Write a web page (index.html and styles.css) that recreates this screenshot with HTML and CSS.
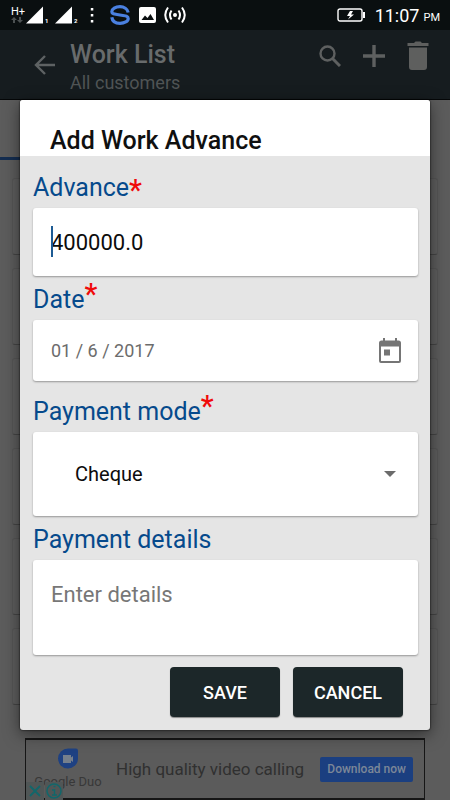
FILE: index.html
```html
<!DOCTYPE html>
<html lang="en">
<head>
<meta charset="utf-8">
<meta name="viewport" content="width=device-width, initial-scale=1">
<title>Work List</title>
<link rel="stylesheet" href="styles.css">
</head>
<body>
<div class="screen">
  <header class="status">
    <div class="status-left">
      <span class="network"><span>H+</span>
        <svg width="12" height="6" viewBox="0 0 12 6"><path d="M3 0L6 3H4V6H2V3H0ZM9 6L6 3H8V0H10V3H12Z" fill="#4c5152"/></svg>
      </span>
      <svg class="signal" width="18" height="18" viewBox="0 0 18 18"><path d="M18 0V18H0Z" fill="#fff"/></svg><span class="sim">1</span>
      <svg class="signal" width="18" height="18" viewBox="0 0 18 18"><path d="M18 0V18H0Z" fill="#fff"/></svg><span class="sim">2</span>
      <svg class="dots" width="4" height="16" viewBox="0 0 4 16"><path d="M.8 1h2.500v2.500H.8zM.8 7h2.500v2.500H.8zM.8 13h2.500v2.500H.8z" fill="#fff"/></svg>
      <svg class="sync" width="20" height="20" viewBox="0 0 20 20" fill="none" stroke="#4a80e0" stroke-width="3.200"><path d="M18.200 7.500C17.500 4 14 1.700 10 1.700C5.500 1.700 1.800 4 1.800 6.800C1.800 8.800 3.500 9.200 10 10C16.500 10.800 18.200 11.500 18.200 13.400C18.200 16.300 14.500 18.300 10 18.300C5.500 18.300 2.300 16 1.800 12.200"/></svg>
      <svg class="photo" width="18" height="18" viewBox="0 0 18 18"><rect y="1" width="17" height="16" rx="2" fill="#fff"/><path d="M2.500 14L6 9.500L8.500 12L11.500 8L15 14Z" fill="#0a0f10"/></svg>
      <svg width="22" height="18" viewBox="0 0 22 18" fill="none" stroke="#fff" stroke-width="2"><circle cx="11" cy="9" r="2" fill="#fff" stroke="none"/><path d="M7.500 4.500Q4.500 9 7.500 13.500M14.500 4.500Q17.500 9 14.500 13.500M4 1.500Q-1.500 9 4 16.500M18 1.500Q23.500 9 18 16.500"/></svg>
    </div>
    <div class="status-right">
      <svg width="28" height="14" viewBox="0 0 28 14"><rect x="1" y="1" width="24" height="12" rx="2" fill="none" stroke="#fff" stroke-width="1.400"/><path d="M26 4h2v6h-2z" fill="#fff"/><path d="M13 3L10 8H13L11 11.500L17 6.500H14L16 3Z" fill="#fff"/></svg>
      <span class="time">11:07</span><span class="ampm">PM</span>
    </div>
  </header>

  <div class="appbar">
    <button class="icon-btn back" aria-label="Back"><svg width="22" height="20" viewBox="0 0 22 20" fill="none" stroke="#5e6263" stroke-width="2.400"><path d="M21 10H2M11 1L2 10L11 19"/></svg></button>
    <div class="titles">
      <h1>Work List</h1>
      <p>All customers</p>
    </div>
    <div class="actions">
      <button class="icon-btn" aria-label="Search"><svg width="22" height="22" viewBox="0 0 22 22" fill="none" stroke="#5e6060" stroke-width="2.400"><circle cx="8.500" cy="8.500" r="7"/><path d="M13.500 13.500L21 21" stroke-width="3"/></svg></button>
      <button class="icon-btn" aria-label="Add"><svg width="24" height="24" viewBox="0 0 24 24"><path d="M10.300 1h3.400v9.300H23v3.400H13.700V23H10.300V13.700H1V10.300H10.300Z" fill="#5e6060"/></svg></button>
      <button class="icon-btn" aria-label="Delete"><svg width="22" height="30" viewBox="0 0 22 30"><path d="M0.500 2H7L8.500 .5H13.500L15 2H21.500V5H.5ZM2 6.500H20V26Q20 29 17 29H5Q2 29 2 26Z" fill="#5e5f5e"/></svg></button>
    </div>
  </div>

  <main class="content">
    <div class="tabs"><span class="tab"></span><span></span></div>
    <div class="list">
      <div class="item"></div><div class="item"></div><div class="item"></div>
      <div class="item"></div><div class="item"></div><div class="item"></div>
    </div>
  </main>

  <aside class="ad">
    <div class="brand">
      <svg width="20" height="22" viewBox="0 0 20 22"><path d="M10 .5H18Q20 .5 20 2.500V11A10 10 0 1 1 10 .5Z" fill="#1e4182"/><path d="M5 7h8v2.500l2-1.500v6l-2-1.500V15H5Z" fill="#757f8c"/></svg>
      <span>Google Duo</span>
    </div>
    <span class="pitch">High quality video calling</span>
    <a class="download" href="#">Download now</a>
    <div class="ad-badges">
      <button class="badge" aria-label="Close ad"><svg width="18" height="18" viewBox="0 0 18 18" stroke="#11676b" stroke-width="1.800"><path d="M4 4L14 14M14 4L4 14"/></svg></button>
      <button class="badge" aria-label="Ad information"><svg width="18" height="18" viewBox="0 0 18 18" fill="none" stroke="#11676b" stroke-width="1.500"><circle cx="9" cy="9" r="7"/><path d="M7 8H9.500V13M7 13H12M8.500 4.500H10.500" /></svg></button>
    </div>
  </aside>

  <form class="dialog" role="dialog" aria-labelledby="dialog-title">
    <h2 id="dialog-title">Add Work Advance</h2>
    <div class="dialog-body">
      <label class="label first" for="advance">Advance<span class="star low">*</span></label>
      <div class="field amount"><input id="advance" type="text" inputmode="decimal" value="400000.0"><i class="caret"></i></div>

      <label class="label" for="date">Date<span class="star">*</span></label>
      <div class="field date">
        <input id="date" type="text" value="01 / 6 / 2017">
        <button class="icon-btn" type="button" aria-label="Choose date"><svg width="24" height="26" viewBox="0 0 24 26"><path fill="#757575" fill-rule="evenodd" d="M5 0h2v2.500h10V0h2v2.500h1.500Q23 2.500 23 5V23Q23 25 21 25H3Q1 25 1 23V5Q1 2.500 3.500 2.500H5ZM3 8.500V23H21V8.500ZM6 11.500H12V17.500H6Z"/></svg></button>
      </div>

      <label class="label roomy" for="mode">Payment mode<span class="star">*</span></label>
      <div class="field mode">
        <select id="mode"><option>Cheque</option><option>Cash</option></select>
        <svg class="arrow" width="12" height="6" viewBox="0 0 12 6"><path d="M0 0H12L6 6Z" fill="#6b6b6b"/></svg>
      </div>

      <label class="label" for="details">Payment details</label>
      <div class="field details"><textarea id="details" placeholder="Enter details"></textarea></div>

      <div class="buttons">
        <button class="btn" type="button">SAVE</button>
        <button class="btn" type="button">CANCEL</button>
      </div>
    </div>
  </form>
</div>
</body>
</html>
```
FILE: styles.css
```css
* { box-sizing: border-box; }
body {
  margin: 0;
  font-family: Roboto, "Liberation Sans", sans-serif;
  background: #5c5c5c;
}
h1, h2, p { margin: 0; }
button, input, select, textarea { font-family: inherit; margin: 0; }
svg { display: block; flex: none; }

.screen {
  position: relative;
  min-height: 100vh;
  display: flex;
  flex-direction: column;
  overflow: hidden;
}

.status {
  height: 30px;
  padding: 0 10px 0 11px;
  display: flex;
  justify-content: space-between;
  align-items: center;
  background: #0a0f10;
  color: #fff;
}
.status-left, .status-right { display: flex; align-items: center; }
.network {
  display: flex;
  flex-direction: column;
  width: 13px;
  margin-right: 2px;
  font-size: 11px;
  line-height: 10px;
}
.sim {
  width: 6px;
  margin: 12px 4px 0 2px;
  font-size: 6px;
  line-height: 6px;
  font-weight: 700;
}
.signal { width: 17px; }
.dots { margin: 0 16px 0 6px; }
.sync { margin-right: 9px; }
.photo { margin-right: 7px; }
.time { margin-left: 10px; font-size: 18px; }
.ampm { margin: 5px 0 0 4px; font-size: 11px; }

.appbar {
  height: 70px;
  display: flex;
  padding: 0 21px 0 34px;
  background: #161c1f;
  border-bottom: 1px solid #050708;
}
.icon-btn {
  padding: 0;
  border: 0;
  background: none;
  display: flex;
  align-items: center;
}
.back { margin-right: 14px; }
.titles { flex: 1; padding-top: 10px; color: #686b6c; }
.titles h1 { font-size: 25px; line-height: 30px; font-weight: 500; }
.titles p { font-size: 18px; line-height: 26px; color: #505455; }
.actions { display: flex; gap: 21px; height: 52px; align-items: center; }

.content { flex: 1; }
.tabs { display: flex; height: 60px; }
.tabs span { flex: 1; }
.tab { border-bottom: 3px solid #142d50; }
.list { display: flex; flex-direction: column; gap: 13px; padding: 18px 12px 0; }
.item {
  height: 77px;
  border-radius: 3px;
  background: #5e5e5e;
  border: 1px solid #555;
  border-bottom-color: #454545;
}

.ad {
  position: relative;
  height: 62px;
  margin: 0 25px;
  padding: 0 11px;
  display: flex;
  align-items: center;
  border: 2px solid #161616;
  border-left-width: 1px;
  border-right-width: 1px;
  background: #5b5b5b;
}
.brand {
  width: 62px;
  display: flex;
  flex-direction: column;
  align-items: center;
  gap: 4px;
  font-size: 13px;
  line-height: 16px;
  color: #383838;
  white-space: nowrap;
}
.pitch { flex: 1; margin-left: 17px; font-size: 17px; color: #303030; white-space: nowrap; }
.download {
  padding: 0 7px;
  border-radius: 2px;
  background: #1b3f80;
  color: #7b8798;
  font-size: 12px;
  line-height: 25px;
  font-weight: 500;
  text-decoration: none;
  white-space: nowrap;
}
.ad-badges { position: absolute; left: 0; bottom: -2px; display: flex; gap: 1px; }
.badge { padding: 0; border: 0; background: #505656; }

.dialog {
  position: absolute;
  top: 100px;
  left: 20px;
  right: 20px;
  border-radius: 3px;
  background: #e5e5e5;
  box-shadow: 0 0 2px #000, 0 4px 16px rgba(0, 0, 0, .5);
}
.dialog h2 {
  padding: 26px 30px 0;
  border-radius: 3px 3px 0 0;
  background: #fff;
  color: #101010;
  font-size: 25px;
  line-height: 30px;
  font-weight: 500;
}
.dialog-body { display: flex; flex-direction: column; padding: 0 12px 13px 13px; }
.label {
  padding: 9px 0 5px;
  color: #064a8c;
  font-size: 25px;
  line-height: 30px;
}
.first { padding-top: 17px; }
.roomy { padding-top: 16px; }
.star { position: relative; top: -4px; color: #f00a0a; font-size: 29px; line-height: 1px; font-weight: 500; }
.low { top: 4px; }
.field {
  position: relative;
  display: flex;
  align-items: center;
  padding: 0 16px 0 18px;
  border-radius: 3px;
  background: #fff;
  box-shadow: 0 1px 2px rgba(0, 0, 0, .35);
}
.field input, .field select, .field textarea {
  flex: 1;
  min-width: 0;
  padding: 0;
  border: 0;
  outline: 0;
  background: none;
  color: #0c0c0c;
  font-size: 22px;
}
.amount { height: 68px; }
.caret { position: absolute; left: 18px; top: 18px; width: 2px; height: 31px; background: #1d5b94; }
.date { height: 61px; }
.field.date input { color: #6c6c6c; font-size: 18px; }
.mode { height: 84px; }
.field.mode select { appearance: none; padding-left: 24px; font-size: 20px; line-height: 30px; }
.arrow { position: absolute; right: 22px; pointer-events: none; }
.details { height: 95px; }
.details textarea { height: 54px; line-height: 28px; resize: none; }
.details textarea::placeholder { color: #777; opacity: 1; }

.buttons { display: flex; justify-content: flex-end; gap: 13px; padding: 12px 15px 0 0; }
.btn {
  width: 110px;
  height: 50px;
  padding: 0;
  border: 0;
  border-radius: 4px;
  background: #1c2729;
  color: #fff;
  font-size: 18px;
  font-weight: 500;
  box-shadow: 0 1px 1px rgba(0, 0, 0, .4);
}
```
